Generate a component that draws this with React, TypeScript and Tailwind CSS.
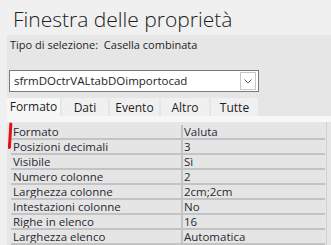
const rows: [string, string][] = [
  ["Formato", "Valuta"],
  ["Posizioni decimali", "3"],
  ["Visibile", "Sì"],
  ["Numero colonne", "2"],
  ["Larghezza colonne", "2cm;2cm"],
  ["Intestazioni colonne", "No"],
  ["Righe in elenco", "16"],
  ["Larghezza elenco", "Automatica"],
];

const tabs = [
  { label: "Formato", w: "w-[53px]" },
  { label: "Dati", w: "w-[46px]" },
  { label: "Evento", w: "w-[49px]" },
  { label: "Altro", w: "w-[48px]" },
  { label: "Tutte", w: "w-[47px]" },
];

export default function App() {
  return (
    <div
      className="relative h-[245px] w-[331px] overflow-hidden bg-[#f0f0f0] text-[#1e1e1e]"
      style={{ fontFamily: '"Open Sans", "Noto Sans", sans-serif' }}
    >
      <h1 className="h-[35px] pl-[13px] pt-[5px] text-[21px] font-light leading-[28px] text-[#202020]">
        Finestra delle proprietà
      </h1>

      <div className="ml-[7px] h-[210px] bg-[#e6e6e6]">
        <div className="pl-[3px] pt-[2px] text-[11px] leading-[15px]">
          Tipo di selezione:&nbsp;&nbsp;Casella combinata
        </div>

        <div className="ml-[2px] mt-[18px] flex h-[22px] w-[250px] items-center justify-between border border-[#7a7a7a] bg-white pl-[4px] pr-[2px]">
          <span className="text-[11.5px] leading-none">sfrmDOctrVALtabDOimportocad</span>
          <span className="flex h-[18px] w-[16px] items-center justify-center border border-[#c8c8c8] bg-white">
            <svg width="8" height="5" viewBox="0 0 8 5">
              <path d="M0.5 0.5 L4 4 L7.5 0.5" fill="none" stroke="#606060" strokeWidth="1" />
            </svg>
          </span>
        </div>

        <div className="mt-[6px] flex h-[18px] gap-[2px]">
          {tabs.map((t, i) => (
            <div
              key={t.label}
              className={`${t.w} flex justify-center text-[12px] ${
                i === 0 ? "items-start bg-[#f7f7f7] pt-[1px]" : "items-end bg-[#f0f0f0]"
              } leading-[16px]`}
            >
              {t.label}
            </div>
          ))}
        </div>

        <div className="h-[6px] w-full bg-[#f7f7f7]" />

        <div className="flex pl-[4px]">
          <div className="w-[314px] pt-[3px]">
            {rows.map(([k, v]) => (
              <div key={k} className="flex h-[15px] border-b-2 border-[#c3c3c3] text-[11.5px] leading-[13px] text-[#262a33]">
                <div className="w-[172px] overflow-hidden border-r-2 border-[#c3c3c3] bg-[#e5e5e5] pl-[2px]">{k}</div>
                <div className="flex-1 overflow-hidden bg-[#e5e5e5] pl-[1px]">{v}</div>
              </div>
            ))}
          </div>
          <div className="ml-[1px] w-[1px] bg-[#d0d0d0]" />
        </div>
      </div>

      <svg className="absolute left-[6px] top-[122px] z-10" width="8" height="28" viewBox="0 0 8 28">
        <path d="M4.8 2 C4.6 8, 4 15, 3.4 25.5" fill="none" stroke="#e3101c" strokeWidth="3" strokeLinecap="round" />
      </svg>
    </div>
  );
}
